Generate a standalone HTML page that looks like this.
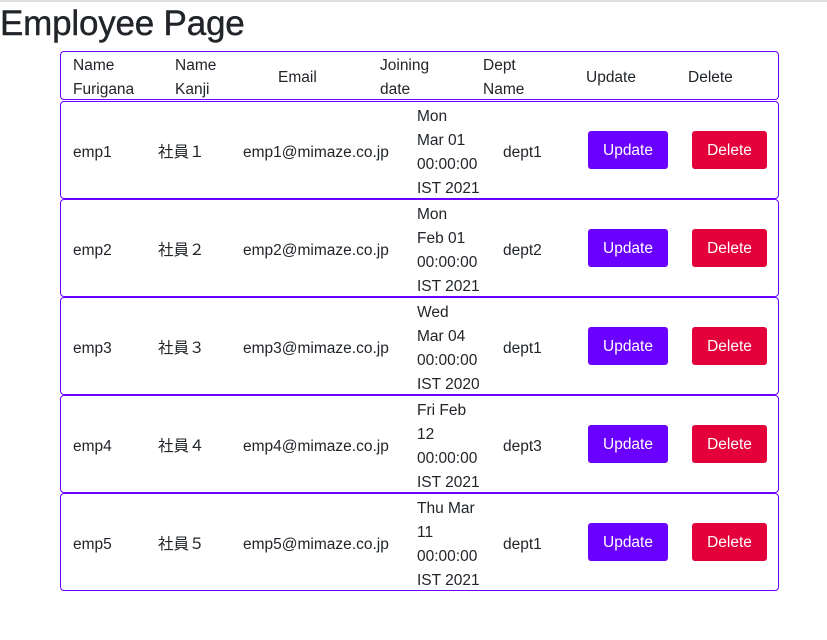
<!DOCTYPE html>
<html><head><meta charset="utf-8"><style>
body{margin:0;width:827px;height:640px;position:relative;font-family:"Liberation Sans","Noto Sans CJK JP",sans-serif;color:#212529;font-size:15.5px;background:#fff;overflow:hidden}
.topline{position:absolute;left:0;top:0;width:827px;height:2px;background:#e0e0e0}
h1{position:absolute;left:0;top:4px;margin:0;font-size:35px;font-weight:normal;line-height:40px;letter-spacing:-0.2px;-webkit-text-stroke:0.4px #212529}
.box{position:absolute;left:60px;width:717px;border:1px solid #6a00ff;border-radius:4px}
.t{position:absolute;line-height:24px;white-space:nowrap;margin-top:2px}
.btn{position:absolute;height:38px;line-height:39px;text-align:center;color:#fff;border-radius:3px;font-size:15.5px}
.u{background:#6a00ff;width:80px;left:527px}
.d{background:#e4003a;width:75px;left:631px}
</style></head><body>
<div class="topline"></div>
<h1>Employee Page</h1>
<div class="box" style="top:51px;height:47px">
<div class="t" style="left:12px;top:0">Name<br>Furigana</div>
<div class="t" style="left:114px;top:0">Name<br>Kanji</div>
<div class="t" style="left:217px;top:12px">Email</div>
<div class="t" style="left:319px;top:0">Joining<br>date</div>
<div class="t" style="left:422px;top:0">Dept<br>Name</div>
<div class="t" style="left:525px;top:12px">Update</div>
<div class="t" style="left:627px;top:12px">Delete</div>
</div>
<div class="box" style="top:101px;height:96px">
<div class="t" style="left:12px;top:37px">emp1</div><div class="t" style="left:97px;top:37px">社員１</div><div class="t" style="left:182px;top:37px">emp1@mimaze.co.jp</div>
<div class="t" style="left:356px;top:1px">Mon<br>Mar 01<br>00:00:00<br>IST 2021</div><div class="t" style="left:442px;top:37px">dept1</div>
<div class="btn u" style="top:29px">Update</div><div class="btn d" style="top:29px">Delete</div></div>
<div class="box" style="top:199px;height:96px">
<div class="t" style="left:12px;top:37px">emp2</div><div class="t" style="left:97px;top:37px">社員２</div><div class="t" style="left:182px;top:37px">emp2@mimaze.co.jp</div>
<div class="t" style="left:356px;top:1px">Mon<br>Feb 01<br>00:00:00<br>IST 2021</div><div class="t" style="left:442px;top:37px">dept2</div>
<div class="btn u" style="top:29px">Update</div><div class="btn d" style="top:29px">Delete</div></div>
<div class="box" style="top:297px;height:96px">
<div class="t" style="left:12px;top:37px">emp3</div><div class="t" style="left:97px;top:37px">社員３</div><div class="t" style="left:182px;top:37px">emp3@mimaze.co.jp</div>
<div class="t" style="left:356px;top:1px">Wed<br>Mar 04<br>00:00:00<br>IST 2020</div><div class="t" style="left:442px;top:37px">dept1</div>
<div class="btn u" style="top:29px">Update</div><div class="btn d" style="top:29px">Delete</div></div>
<div class="box" style="top:395px;height:96px">
<div class="t" style="left:12px;top:37px">emp4</div><div class="t" style="left:97px;top:37px">社員４</div><div class="t" style="left:182px;top:37px">emp4@mimaze.co.jp</div>
<div class="t" style="left:356px;top:1px">Fri Feb<br>12<br>00:00:00<br>IST 2021</div><div class="t" style="left:442px;top:37px">dept3</div>
<div class="btn u" style="top:29px">Update</div><div class="btn d" style="top:29px">Delete</div></div>
<div class="box" style="top:493px;height:96px">
<div class="t" style="left:12px;top:37px">emp5</div><div class="t" style="left:97px;top:37px">社員５</div><div class="t" style="left:182px;top:37px">emp5@mimaze.co.jp</div>
<div class="t" style="left:356px;top:1px">Thu Mar<br>11<br>00:00:00<br>IST 2021</div><div class="t" style="left:442px;top:37px">dept1</div>
<div class="btn u" style="top:29px">Update</div><div class="btn d" style="top:29px">Delete</div></div>
</body></html>
